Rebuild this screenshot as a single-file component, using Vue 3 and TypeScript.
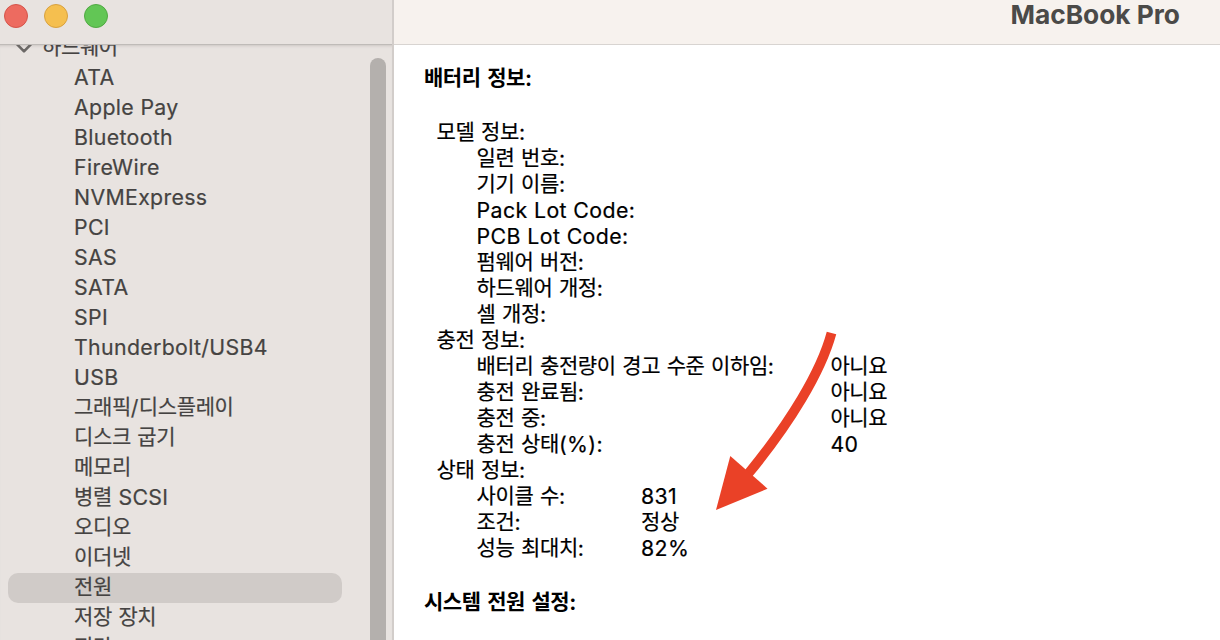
<script setup lang="ts">
interface Run { text: string; ko: boolean }
interface Row { label: string; value?: string }
interface Group { title: string; wide?: boolean; rows: Row[] }

const devices: string[] = [
  'ATA', 'Apple Pay', 'Bluetooth', 'FireWire', 'NVMExpress', 'PCI', 'SAS', 'SATA', 'SPI',
  'Thunderbolt/USB4', 'USB', '그래픽/디스플레이', '디스크 굽기', '메모리', '병렬 SCSI',
  '오디오', '이더넷', '전원', '저장 장치', '진단',
]
const selected = '전원'

const groups: Group[] = [
  {
    title: '모델 정보:',
    rows: [
      { label: '일련 번호:' }, { label: '기기 이름:' }, { label: 'Pack Lot Code:' },
      { label: 'PCB Lot Code:' }, { label: '펌웨어 버전:' }, { label: '하드웨어 개정:' }, { label: '셀 개정:' },
    ],
  },
  {
    title: '충전 정보:',
    wide: true,
    rows: [
      { label: '배터리 충전량이 경고 수준 이하임:', value: '아니요' },
      { label: '충전 완료됨:', value: '아니요' },
      { label: '충전 중:', value: '아니요' },
      { label: '충전 상태(%):', value: '40' },
    ],
  },
  {
    title: '상태 정보:',
    rows: [
      { label: '사이클 수:', value: '831' },
      { label: '조건:', value: '정상' },
      { label: '성능 최대치:', value: '82%' },
    ],
  },
]

// Hangul and Latin runs use different faces and tracking.
function runs(text: string): Run[] {
  const parts = text.match(/[가-힣]+(?: +[가-힣]+)* ?|[^가-힣]+/g) ?? []
  return parts.map((part) => ({ text: part, ko: /[가-힣]/.test(part) }))
}
</script>

<template>
  <div class="window">
    <aside class="sidebar">
      <header class="controls">
        <span class="light close"></span>
        <span class="light minimize"></span>
        <span class="light zoom"></span>
      </header>
      <div class="scroller">
        <nav class="tree">
          <div class="item root">
            <svg class="chevron" width="18" height="12" viewBox="0 0 18 12">
              <path d="M1.8 2 L9 9.4 L16.2 2" fill="none" stroke="#6b6866" stroke-width="2.6" stroke-linecap="round" stroke-linejoin="round" />
            </svg>
            <div><span class="ko">하드웨어</span></div>
          </div>
          <div v-for="d in devices" :key="d" class="item" :class="{ active: d === selected }">
            <span v-for="(r, i) in runs(d)" :key="i" :class="r.ko ? 'ko' : 'lat'">{{ r.text }}</span>
          </div>
        </nav>
        <div class="thumb"></div>
      </div>
    </aside>
    <main class="content">
      <header class="titlebar"><h1>MacBook Pro</h1></header>
      <section class="report">
        <h2><span v-for="(r, i) in runs('배터리 정보:')" :key="i" :class="r.ko ? 'ko' : 'lat'">{{ r.text }}</span></h2>
        <div v-for="g in groups" :key="g.title" class="group" :class="{ wide: g.wide }">
          <div class="line"><span v-for="(r, i) in runs(g.title)" :key="i" :class="r.ko ? 'ko' : 'lat'">{{ r.text }}</span></div>
          <div v-for="row in g.rows" :key="row.label" class="line row">
            <div class="label"><span v-for="(r, i) in runs(row.label)" :key="i" :class="r.ko ? 'ko' : 'lat'">{{ r.text }}</span></div>
            <div v-if="row.value" class="value"><span v-for="(r, i) in runs(row.value)" :key="i" :class="r.ko ? 'ko' : 'lat'">{{ r.text }}</span></div>
          </div>
        </div>
        <h2 class="next"><span v-for="(r, i) in runs('시스템 전원 설정:')" :key="i" :class="r.ko ? 'ko' : 'lat'">{{ r.text }}</span></h2>
      </section>
    </main>
    <svg class="arrow" width="140" height="190" viewBox="700 325 140 190">
      <path d="M831.5 333 C821 372 790 423 748 474" fill="none" stroke="#ea4127" stroke-width="9.8" />
      <path d="M716 510 L730.3 456 L767.5 488.7 Z" fill="#ea4127" />
    </svg>
  </div>
</template>

<style>
body { margin: 0; overflow: hidden; }
</style>

<style scoped>
.window {
  position: relative;
  display: flex;
  width: 1220px;
  height: 640px;
  overflow: hidden;
  background: #fff;
  font-family: Inter, "Noto Sans CJK KR", sans-serif;
  font-size: 21.3px;
}
.sidebar {
  box-sizing: border-box;
  display: flex;
  flex-direction: column;
  width: 394px;
  border-right: 2px solid #d2cdca;
  background: #e8e3e0;
  color: #454342;
}
.controls {
  box-sizing: border-box;
  display: flex;
  gap: 16px;
  height: 45px;
  flex: none;
  padding: 4px;
  border-bottom: 1px solid #bfbbb8;
}
.light { box-sizing: border-box; width: 24px; height: 24px; border-radius: 50%; }
.close { background: #ed6b60; border: 1px solid #d5544a; }
.minimize { background: #f5bf4f; border: 1px solid #d8a13f; }
.zoom { background: #62c655; border: 1px solid #50a942; }
.scroller {
  display: flex;
  flex: 1;
  min-height: 0;
  overflow: hidden;
  box-shadow: inset 0 3px 3px -2px #cbc6c3;
}
.tree { width: 342px; margin: -12px 28px 0 0; flex: none; }
.item {
  box-sizing: border-box;
  height: 30px;
  margin-left: 8px;
  padding-left: 66px;
  border-radius: 10px;
  line-height: 28px;
  white-space: pre;
}
.root { display: flex; align-items: flex-start; padding-left: 7px; gap: 9px; }
.chevron { flex: none; margin-top: 9px; }
.active { background: #d0cbc8; }
.thumb { width: 16px; height: 640px; margin-top: 13px; border-radius: 8px 8px 0 0; background: #b4b0ad; flex: none; }
.content { flex: 1; min-width: 0; }
.titlebar {
  box-sizing: border-box;
  height: 45px;
  padding-right: 40px;
  border-bottom: 1px solid #d8d4d1;
  background: #f7f2ee;
  text-align: right;
}
h1 { margin: 0; color: #4b4a48; font-size: 26.3px; font-weight: 700; line-height: 30px; }
.report { padding: 21px 0 0 30px; color: #000; white-space: pre; }
h2 { height: 26px; margin: 0 0 28px; font-size: inherit; font-weight: 700; line-height: 24px; }
h2 .ko { letter-spacing: -0.45px; }
.next { margin-top: 28px; }
.line { height: 26px; margin-left: 12.6px; line-height: 24px; }
.row { display: flex; padding-left: 40px; }
.label { width: 164.4px; flex: none; }
.wide .label { width: 353.8px; }
.ko {
  font-family: "Noto Sans CJK KR", sans-serif;
  font-size: 21px;
  line-height: 16px;
  vertical-align: 1px;
  letter-spacing: -0.38px;
  word-spacing: 2.2px;
}
.lat { letter-spacing: 0.4px; }
.item .lat { letter-spacing: 0.34px; }
.line .ko, .line .lat { -webkit-text-stroke: 0.2px #000; }
.item .ko, .item .lat { -webkit-text-stroke: 0.2px #454342; }
.arrow { position: absolute; left: 700px; top: 325px; }
</style>
